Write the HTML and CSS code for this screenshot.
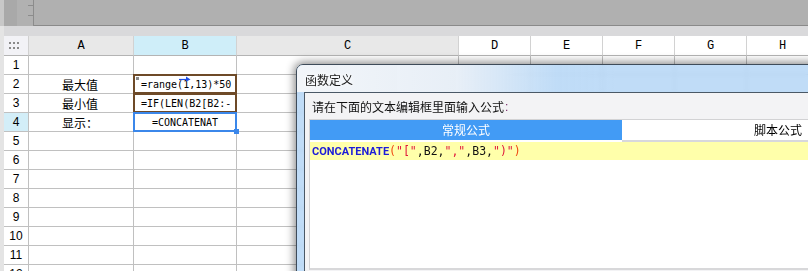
FILE: index.html
```html
<!DOCTYPE html>
<html>
<head>
<meta charset="utf-8">
<link rel="stylesheet" href="styles.css">
</head>
<body>
<div class="app">
  <div class="edge"></div>
  <div class="main">
    <div class="toolbar">
      <div class="tb-dark"></div>
      <div class="tb-ruler"><span class="tick"></span><span class="tick"></span></div>
      <div class="tb-fill"></div>
    </div>
    <div class="band"></div>
    <div class="sheet">
      <div class="corner">
        <svg width="12" height="8" viewBox="0 0 12 8"><g fill="#8a8a8a"><rect x="0" y="0" width="2" height="2"/><rect x="4" y="0" width="2" height="2"/><rect x="8" y="0" width="2" height="2"/><rect x="0" y="5" width="2" height="2"/><rect x="4" y="5" width="2" height="2"/><rect x="8" y="5" width="2" height="2"/></g></svg>
      </div>
      <div class="ch">A</div><div class="ch sel">B</div><div class="ch">C</div><div class="ch white">D</div><div class="ch white">E</div><div class="ch white">F</div><div class="ch white">G</div><div class="ch white">H</div>

      <div class="rh">1</div><div class="c"></div><div class="c"></div><div class="c"></div><div class="c"></div><div class="c"></div><div class="c"></div><div class="c"></div><div class="c"></div>

      <div class="rh">2</div><div class="c cn">最大值</div>
      <div class="c f ref">
        <span class="mark"></span>
        <svg class="arrow" width="12" height="6" viewBox="0 0 12 6"><path d="M0 3.5H10" stroke="#1f4fe6" stroke-width="1.2"/><path d="M7 0.5L11.5 3.5L7 5.5Z" fill="#1f4fe6"/></svg>
        =range(1,13)*50</div>
      <div class="c"></div><div class="c"></div><div class="c"></div><div class="c"></div><div class="c"></div><div class="c"></div>

      <div class="rh">3</div><div class="c cn">最小值</div><div class="c f ref">=IF(LEN(B2[B2:-</div><div class="c"></div><div class="c"></div><div class="c"></div><div class="c"></div><div class="c"></div><div class="c"></div>

      <div class="rh sel">4</div><div class="c cn">显示：</div><div class="c f center active">=CONCATENAT<span class="handle"></span></div><div class="c"></div><div class="c"></div><div class="c"></div><div class="c"></div><div class="c"></div><div class="c"></div>

      <div class="rh">5</div><div class="c"></div><div class="c"></div><div class="c"></div><div class="c"></div><div class="c"></div><div class="c"></div><div class="c"></div><div class="c"></div>
      <div class="rh">6</div><div class="c"></div><div class="c"></div><div class="c"></div><div class="c"></div><div class="c"></div><div class="c"></div><div class="c"></div><div class="c"></div>
      <div class="rh">7</div><div class="c"></div><div class="c"></div><div class="c"></div><div class="c"></div><div class="c"></div><div class="c"></div><div class="c"></div><div class="c"></div>
      <div class="rh">8</div><div class="c"></div><div class="c"></div><div class="c"></div><div class="c"></div><div class="c"></div><div class="c"></div><div class="c"></div><div class="c"></div>
      <div class="rh">9</div><div class="c"></div><div class="c"></div><div class="c"></div><div class="c"></div><div class="c"></div><div class="c"></div><div class="c"></div><div class="c"></div>
      <div class="rh">10</div><div class="c"></div><div class="c"></div><div class="c"></div><div class="c"></div><div class="c"></div><div class="c"></div><div class="c"></div><div class="c"></div>
      <div class="rh">11</div><div class="c"></div><div class="c"></div><div class="c"></div><div class="c"></div><div class="c"></div><div class="c"></div><div class="c"></div><div class="c"></div>
      <div class="rh">12</div><div class="c"></div><div class="c"></div><div class="c"></div><div class="c"></div><div class="c"></div><div class="c"></div><div class="c"></div><div class="c"></div>
    </div>
  </div>

  <div class="dialog">
    <div class="titlebar">函数定义</div>
    <div class="client">
      <div class="prompt">请在下面的文本编辑框里面输入公式<span class="colon">:</span></div>
      <div class="panel">
        <div class="tabs">
          <div class="tab on">常规公式</div>
          <div class="tab">脚本公式</div>
        </div>
        <div class="editor">
          <div class="line"><b class="fn">CONCATENATE</b><span class="p">(</span><span class="s">"["</span>,B2,<span class="s">","</span>,B3,<span class="s">")"</span><span class="p">)</span></div>
        </div>
      </div>
    </div>
  </div>
</div>
</body>
</html>
```

FILE: styles.css
```css
* { box-sizing: border-box; }
html, body { margin: 0; padding: 0; }
body {
  width: 808px;
  height: 271px;
  overflow: hidden;
  background: #fff;
  font-family: "Liberation Sans", "Noto Sans CJK SC", sans-serif;
  font-size: 12px;
  color: #000;
}
.app {
  position: relative;
  display: flex;
  width: 808px;
  height: 271px;
  overflow: hidden;
}
.edge {
  width: 4px;
  flex: none;
  background: linear-gradient(#c8c8c8 0, #c8c8c8 26px, #e4e4e4 26px);
}
.main {
  flex: 1;
  display: flex;
  flex-direction: column;
  min-width: 0;
}
.toolbar {
  height: 26px;
  display: flex;
  flex: none;
}
.tb-dark { width: 13px; background: #a9a9a9; }
.tb-ruler {
  width: 17px;
  background: #b1b1b1;
  border-right: 1px solid #8c8c8c;
  display: flex;
  flex-direction: column;
  align-items: flex-end;
  padding-top: 5px;
  gap: 9px;
}
.tick { width: 5px; height: 1px; background: #8c8c8c; display: block; }
.tb-fill { flex: 1; background: #b0b0b0; border-bottom: 1px solid #8a8a8a; }
.band { height: 10px; background: #d9d9db; flex: none; }

.sheet {
  display: grid;
  grid-template-columns: 25px 105px 103px 222px 72px 72px 72px 72px 72px;
  grid-template-rows: 20px;
  grid-auto-rows: 19px;
}
.corner {
  background: #f2f2f6;
  border-right: 1px solid #d0d0d0;
  border-bottom: 1px solid #b4b4b4;
  display: flex;
  align-items: center;
  padding-left: 5px;
}
.ch {
  background: #e8e8e8;
  border-right: 1px solid #d2d2d2;
  border-bottom: 1px solid #b4b4b4;
  display: flex;
  align-items: center;
  justify-content: center;
  font-family: "Liberation Mono", monospace;
  font-size: 12px;
  padding-top: 1px;
}
.ch.sel { background: #cfeef9; }
.ch.white { background: #fff; }
.rh {
  background: #fff;
  border-right: 1px solid #c0c0c0;
  border-bottom: 1px solid #c0c0c0;
  display: flex;
  align-items: center;
  justify-content: center;
  font-family: "Liberation Sans", sans-serif;
  font-size: 12px;
}
.rh.sel { background: #d3eef8; }
.c {
  position: relative;
  border-right: 1px solid #c0c0c0;
  border-bottom: 1px solid #c0c0c0;
  white-space: nowrap;
  overflow: visible;
  display: flex;
  align-items: center;
}
.cn {
  justify-content: center;
  font-family: "Noto Sans CJK SC", sans-serif;
  font-size: 12px;
  padding-right: 2px;
}
.f {
  font-family: "DejaVu Sans Mono", monospace;
  font-size: 10px;
  padding-left: 7px;
  padding-top: 1px;
}
.f.center { justify-content: center; padding-left: 0; }
.ref::after {
  content: "";
  position: absolute;
  left: -1px; top: -1px; right: -1px; bottom: -1px;
  border: 2px solid #6e4a28;
}
.active::after {
  content: "";
  position: absolute;
  left: -1px; top: -1px; right: -1px; bottom: -1px;
  border: 2px solid #3b87ea;
}
.handle {
  position: absolute;
  right: -3px; bottom: -3px;
  width: 5px; height: 5px;
  background: #3b87ea;
  z-index: 2;
}
.arrow { position: absolute; left: 45px; top: 1px; }
.mark {
  position: absolute;
  left: 2px; top: 2px;
  width: 3px; height: 3px;
  background: #8a8a8a;
  z-index: 2;
}

/* dialog */
.dialog {
  position: absolute;
  left: 296px;
  top: 64px;
  width: 560px;
  height: 240px;
  border: 1px solid #3e4b59;
  border-radius: 7px 7px 0 0;
  background: rgba(178, 212, 245, 0.82);
  -webkit-backdrop-filter: blur(2px);
  backdrop-filter: blur(2px);
  box-shadow: 0 0 9px 2px rgba(0, 0, 0, 0.45);
  display: flex;
  flex-direction: column;
  overflow: hidden;
}
.titlebar {
  height: 27px;
  flex: none;
  display: flex;
  align-items: center;
  padding-left: 8px;
  padding-top: 1px;
  font-family: "Noto Sans CJK SC", sans-serif;
  font-size: 12px;
  color: #1a1a1a;
  text-shadow: 0 0 5px #fff, 0 0 8px #fff;
  background: linear-gradient(90deg, rgba(244, 246, 249, 0.96) 0, rgba(236, 241, 247, 0.9) 160px, rgba(190, 220, 248, 0.2) 260px, rgba(185, 217, 247, 0) 320px);
}
.client {
  flex: 1;
  margin-left: 7px;
  border-left: 1px solid #4a5866;
  border-top: 1px solid #4a5866;
  background: #f3f3f5;
  padding-left: 4px;
  display: flex;
  flex-direction: column;
}
.prompt {
  height: 26px;
  flex: none;
  display: flex;
  align-items: center;
  padding-left: 3px;
  padding-top: 1px;
  font-family: "Noto Sans CJK SC", sans-serif;
  font-size: 12px;
  color: #111;
}
.colon { color: #7a2a6a; font-family: "Liberation Sans", sans-serif; margin-left: 1px; }
.panel {
  height: 151px;
  flex: none;
  background: #fff;
  border-left: 1px solid #d2d2d4;
  border-top: 1px solid #d2d2d4;
  border-bottom: 2px solid #d8d8da;
  display: flex;
  flex-direction: column;
}
.tabs { display: flex; height: 22px; flex: none; }
.tab {
  width: 312px;
  flex: none;
  display: flex;
  align-items: center;
  justify-content: center;
  font-family: "Noto Sans CJK SC", sans-serif;
  font-size: 12px;
  background: #fff;
  border-bottom: 2px solid #d8d8dc;
  padding-bottom: 1px;
}
.tab.on {
  background: #429bf5;
  color: #fff;
  border-bottom: 2px solid #fff;
}
.editor { flex: 1; }
.line {
  height: 18px;
  background: #ffffaa;
  display: flex;
  align-items: center;
  padding-left: 2px;
  font-family: "DejaVu Sans Mono", monospace;
  font-size: 11.5px;
  color: #111;
  white-space: pre;
}
.fn { color: #1c1cd8; font-weight: bold; font-family: Roboto, sans-serif; font-size: 11px; }
.p { color: #f04a14; }
.s { color: #e0183c; }
```
